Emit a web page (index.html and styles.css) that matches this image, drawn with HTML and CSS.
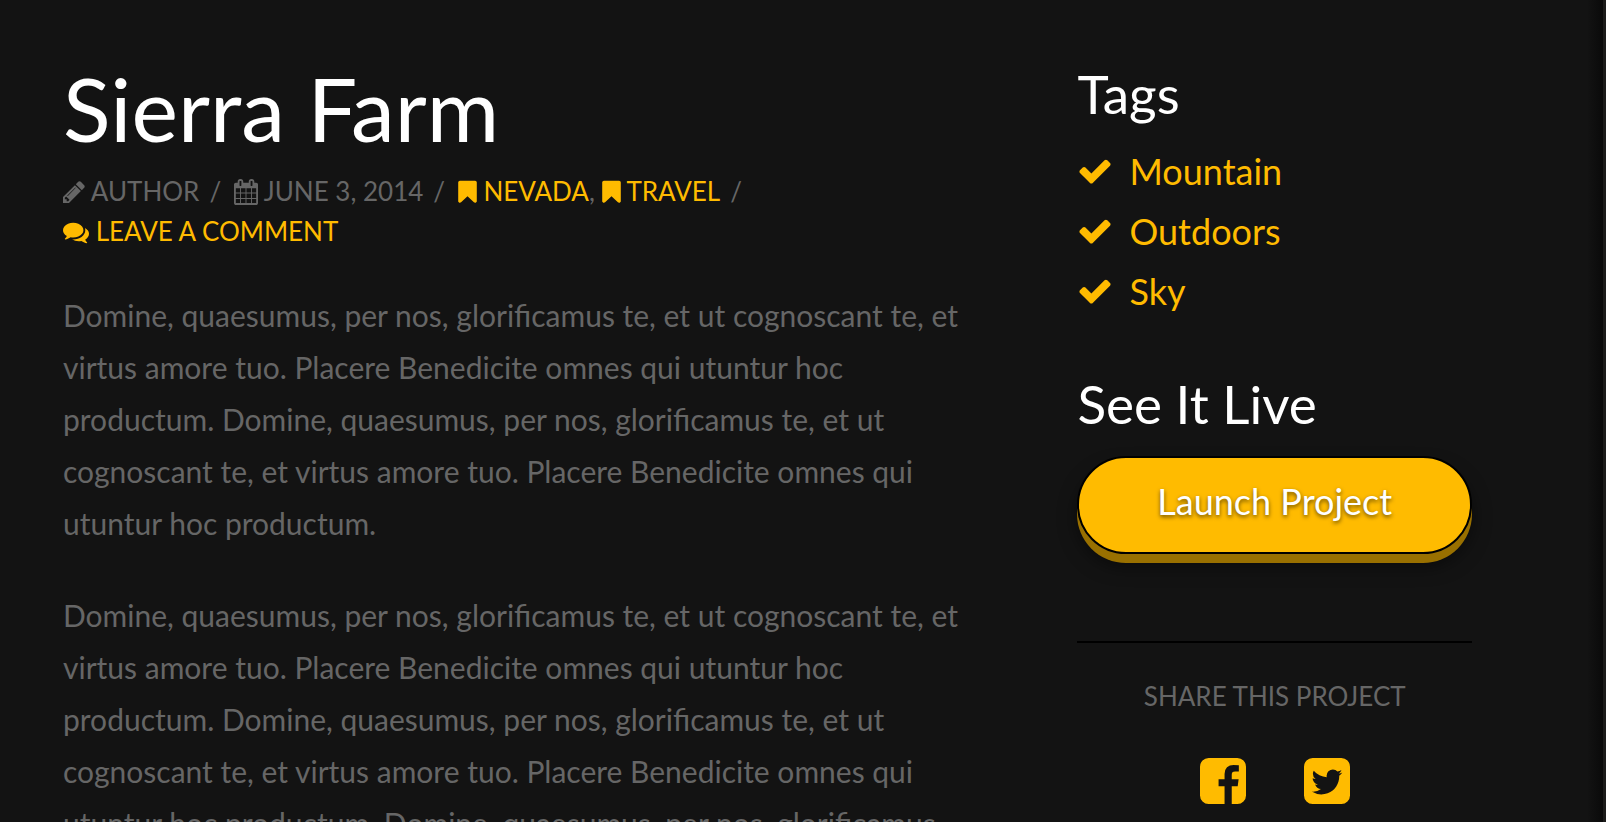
FILE: index.html
```html
<!DOCTYPE html>
<html lang="en">
<head>
<meta charset="utf-8">
<meta name="viewport" content="width=device-width, initial-scale=1">
<title>Sierra Farm</title>
<link rel="stylesheet" href="styles.css">
</head>
<body>
<svg class="sprite" aria-hidden="true">
  <symbol id="pencil" viewBox="128 0 1536 1792"><path d="M491 1536l91-91-235-235-91 91v107h128v128h107zm523-928q0-22-22-22-10 0-17 7l-542 542q-7 7-7 17 0 22 22 22 10 0 17-7l542-542q7-7 7-17zm-54-192l416 416-832 832h-416v-416zm683 96q0 53-37 90l-166 166-416-416 166-165q36-38 90-38 53 0 91 38l235 234q37 39 37 91z"/></symbol>
  <symbol id="calendar" viewBox="64 0 1664 1792"><path d="M192 1664h288v-288h-288v288zm352 0h320v-288h-320v288zm-352-352h288v-320h-288v320zm352 0h320v-320h-320v320zm-352-384h288v-288h-288v288zm736 736h320v-288h-320v288zm-384-736h320v-288h-320v288zm768 736h288v-288h-288v288zm-384-352h320v-320h-320v320zm-352-864v-288q0-13-9.500-22.500t-22.500-9.500h-64q-13 0-22.500 9.500t-9.500 22.500v288q0 13 9.500 22.500t22.500 9.500h64q13 0 22.500-9.500t9.500-22.500zm736 864h288v-320h-288v320zm-384-384h320v-288h-320v288zm384 0h288v-288h-288v288zm32-480v-288q0-13-9.500-22.500t-22.500-9.500h-64q-13 0-22.500 9.500t-9.500 22.500v288q0 13 9.500 22.500t22.500 9.500h64q13 0 22.500-9.500t9.500-22.500zm384-64v1280q0 52-38 90t-90 38h-1408q-52 0-90-38t-38-90v-1280q0-52 38-90t90-38h128v-96q0-66 47-113t113-47h64q66 0 113 47t47 113v96h384v-96q0-66 47-113t113-47h64q66 0 113 47t47 113v96h128q52 0 90 38t38 90z"/></symbol>
  <symbol id="bookmark" viewBox="256 0 1280 1792"><path d="M1420 128q23 0 44 9 33 13 52.500 41t19.500 62v1289q0 34-19.500 62t-52.500 41q-19 8-44 8-48 0-83-32l-441-424-441 424q-36 33-83 33-23 0-44-9-33-13-52.500-41t-19.500-62v-1289q0-34 19.500-62t52.500-41q21-9 44-9h1048z"/></symbol>
  <symbol id="comments" viewBox="0 0 1792 1792"><path d="M1408 768q0 139-94 257t-256.500 186.500-353.500 68.500q-86 0-176-16-124 88-278 128-36 9-86 16h-3q-11 0-20.500-8t-11.500-21q-1-3-1-6.500t.5-6.500 2-6l2.500-5 3.500-5.500 4-5 4.500-5 4-4.500q5-6 23-25t26-29.500 22.500-29 25-38.500 20.500-44q-124-72-195-177t-71-224q0-139 94-257t256.500-186.500 353.500-68.500 353.500 68.500 256.500 186.500 94 257zm384 256q0 120-71 224.500t-195 176.500q10 24 20.500 44t25 38.500 22.500 29 26 29.500 23 25q1 1 4 4.500t4.500 5 4 5 3.500 5.500l2.500 5 2 6 .5 6.500-1 6.500q-3 14-13 22t-22 7q-50-7-86-16-154-40-278-128-90 16-176 16-271 0-472-132 58 4 88 4 161 0 309-45t264-129q125-92 192-212t67-254q0-77-23-152 129 71 204 178t75 230z"/></symbol>
  <symbol id="check" viewBox="0 0 1792 1792"><path d="M1671 566q0 40-28 68l-724 724-136 136q-28 28-68 28t-68-28l-136-136-362-362q-28-28-28-68t28-68l136-136q28-28 68-28t68 28l294 295 656-657q28-28 68-28t68 28l136 136q28 28 28 68z"/></symbol>
  <symbol id="facebook" viewBox="128 128 1536 1536"><path d="M1376 128q119 0 203.500 84.500t84.500 203.500v960q0 119-84.500 203.500t-203.500 84.500h-188v-595h199l30-232h-229v-148q0-56 23.500-84t91.500-28l122-1v-207q-63-9-178-9-136 0-217.500 80t-81.500 226v171h-200v232h200v595h-532q-119 0-203.500-84.500t-84.500-203.500v-960q0-119 84.500-203.500t203.500-84.500h960z"/></symbol>
  <symbol id="twitter" viewBox="128 128 1536 1536"><path d="M1408 610q-56 25-121 34 68-40 93-117-65 38-134 51-61-66-153-66-87 0-148.500 61.500t-61.500 148.500q0 29 5 48-129-7-242-65t-192-155q-29 50-29 106 0 114 91 175-47-1-100-26v1q0 75 50 133.500t123 72.500q-29 8-51 8-13 0-39-4 21 63 74.500 104t121.500 42q-116 90-261 90-26 0-50-3 148 94 322 94 112 0 210-35.500t168-95 120.500-137 75-162 24.500-168.500q0-18-1-27 63-45 105-109zm256-194v960q0 119-84.500 203.500t-203.500 84.500h-960q-119 0-203.500-84.500t-84.500-203.500v-960q0-119 84.500-203.500t203.500-84.500h960q119 0 203.500 84.500t84.500 203.500z"/></symbol>
</svg>
<main class="project">
  <article class="project-info">
    <h1 class="title">Sierra Farm</h1>
    <p class="meta">
      <span class="meta-item"><svg class="icon icon-pencil" aria-hidden="true"><use href="#pencil"/></svg> Author</span>
      <span class="meta-item"><svg class="icon icon-calendar" aria-hidden="true"><use href="#calendar"/></svg> <time datetime="2014-06-03">June 3, 2014</time></span>
      <span class="meta-item"><a href="#nevada"><svg class="icon icon-bookmark" aria-hidden="true"><use href="#bookmark"/></svg> Nevada</a>, <a href="#travel"><svg class="icon icon-bookmark" aria-hidden="true"><use href="#bookmark"/></svg> Travel</a></span>
      <span class="meta-item"><a href="#comments-form"><svg class="icon icon-comments" aria-hidden="true"><use href="#comments"/></svg> Leave a Comment</a></span>
    </p>
    <div class="content">
      <p>Domine, quaesumus, per nos, glorificamus te, et ut cognoscant te, et virtus amore tuo. Placere Benedicite omnes qui utuntur hoc productum. Domine, quaesumus, per nos, glorificamus te, et ut cognoscant te, et virtus amore tuo. Placere Benedicite omnes qui utuntur hoc productum.</p>
      <p>Domine, quaesumus, per nos, glorificamus te, et ut cognoscant te, et virtus amore tuo. Placere Benedicite omnes qui utuntur hoc productum. Domine, quaesumus, per nos, glorificamus te, et ut cognoscant te, et virtus amore tuo. Placere Benedicite omnes qui utuntur hoc productum. Domine, quaesumus, per nos, glorificamus</p>
    </div>
  </article>
  <aside class="project-extra">
    <h2 class="heading">Tags</h2>
    <ul class="tags">
      <li><a class="tag" href="#mountain"><svg class="icon-check" aria-hidden="true"><use href="#check"/></svg>Mountain</a></li>
      <li><a class="tag" href="#outdoors"><svg class="icon-check" aria-hidden="true"><use href="#check"/></svg>Outdoors</a></li>
      <li><a class="tag" href="#sky"><svg class="icon-check" aria-hidden="true"><use href="#check"/></svg>Sky</a></li>
    </ul>
    <h2 class="heading">See It Live</h2>
    <a class="launch" href="#launch">Launch Project</a>
    <section class="share">
      <p class="share-label">Share this Project</p>
      <div class="share-links">
        <a href="#facebook-share" aria-label="Share on Facebook"><svg class="icon-social" aria-hidden="true"><use href="#facebook"/></svg></a>
        <a href="#twitter-share" aria-label="Share on Twitter"><svg class="icon-social" aria-hidden="true"><use href="#twitter"/></svg></a>
      </div>
    </section>
  </aside>
</main>
</body>
</html>
```
FILE: styles.css
```css
* {
  box-sizing: border-box;
}

body {
  margin: 0;
  height: 100vh;
  overflow: hidden;
  background: #1c1b1a;
  color: #666;
  font-family: Lato, "Liberation Sans", sans-serif;
  font-size: 30px;
  line-height: 52px;
}

a {
  color: #ffbb00;
  text-decoration: none;
}

h1, h2, p, ul {
  margin: 0;
  padding: 0;
  font-weight: 400;
}

svg {
  fill: currentColor;
}

.sprite {
  display: none;
}

.project {
  display: grid;
  grid-template-columns: 67% 28%;
  justify-content: space-between;
  min-height: 100vh;
  margin-right: 3px;
  padding: 60px 131px 0 63px;
  background: #131313 linear-gradient(to left, #0a0a0a, #131313) right / 16px 100% no-repeat;
}

.title {
  color: #fff;
  font-size: 88px;
  line-height: 96px;
}

.meta {
  margin: 15px 0 38px;
  font-size: 26px;
  line-height: 40px;
  text-transform: uppercase;
}

.meta-item {
  white-space: nowrap;
}

.meta-item:not(:last-child)::after {
  content: "/";
  padding: 0 6px 0 10px;
}

.icon {
  height: 26px;
  vertical-align: -4px;
}

.icon-pencil {
  width: 22px;
}

.icon-calendar {
  width: 24px;
}

.icon-bookmark {
  width: 19px;
}

.icon-comments {
  width: 26px;
}

.content {
  padding-right: 32px;
}

.content p {
  margin-bottom: 40px;
}

.project-extra {
  padding-top: 4px;
}

.heading {
  color: #fff;
  font-size: 53px;
  line-height: 60px;
}

.tags {
  margin: 17px 0 53px;
  font-size: 36px;
  line-height: 60px;
  list-style: none;
}

.tag {
  display: flex;
  align-items: center;
  gap: 16px;
}

.icon-check {
  width: 36px;
  height: 36px;
}

.launch {
  display: block;
  margin-top: 22px;
  padding: 12px 16px 20px;
  border: 2px solid #000;
  border-radius: 50px;
  background: #ffbb00;
  box-shadow: 0 9px 0 #997000, 0 12px 18px rgba(0, 0, 0, 0.5);
  color: #fff;
  font-size: 36px;
  line-height: 62px;
  text-align: center;
  text-shadow: 0 2px 4px rgba(0, 0, 0, 0.6);
}

.share {
  margin-top: 87px;
  padding-top: 33px;
  border-top: 2px solid #000;
  text-align: center;
}

.share-label {
  font-size: 26px;
  line-height: 40px;
  text-transform: uppercase;
}

.share-links {
  display: flex;
  justify-content: center;
  gap: 58px;
  margin-top: 42px;
}

.icon-social {
  display: block;
  width: 46px;
  height: 46px;
}
```
